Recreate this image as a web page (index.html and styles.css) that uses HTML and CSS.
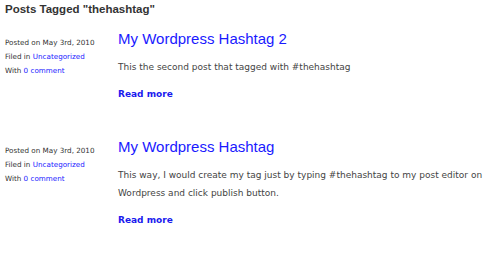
FILE: index.html
```html
<!DOCTYPE html>
<html lang="en">
<head>
  <meta charset="UTF-8">
  <title>Posts Tagged "thehashtag"</title>
  <link rel="stylesheet" href="styles.css">
</head>
<body>
<div class="container">
  <h2 class="archive-title">Posts Tagged "thehashtag"</h2>

  <div class="post">
    <div class="post-meta">
      <p>Posted on May 3rd, 2010</p>
      <p>Filed in <a href="#">Uncategorized</a></p>
      <p>With <a href="#">0 comment</a></p>
    </div>
    <div class="post-body">
      <h3 class="post-title"><a href="#">My Wordpress Hashtag 2</a></h3>
      <p class="post-text">This the second post that tagged with #thehashtag</p>
      <a class="read-more" href="#">Read more</a>
    </div>
  </div>

  <div class="post">
    <div class="post-meta">
      <p>Posted on May 3rd, 2010</p>
      <p>Filed in <a href="#">Uncategorized</a></p>
      <p>With <a href="#">0 comment</a></p>
    </div>
    <div class="post-body">
      <h3 class="post-title"><a href="#">My Wordpress Hashtag</a></h3>
      <p class="post-text">This way, I would create my tag just by typing #thehashtag to my post editor on Wordpress and click publish button.</p>
      <a class="read-more" href="#">Read more</a>
    </div>
  </div>
</div>
</body>
</html>
```

FILE: styles.css
```css
body {
  margin: 0;
  background: #fff;
  font-family: Verdana, "DejaVu Sans", sans-serif;
  color: #444;
}
a {
  color: #2222ff;
  text-decoration: none;
}
.container {
  padding: 0 5px;
}
.archive-title {
  margin: 0;
  font-family: Arial, "Liberation Sans", sans-serif;
  font-size: 11.5px;
  line-height: 18px;
  color: #333;
}
.post {
  display: flex;
  margin-top: 11px;
  margin-bottom: 34px;
}
.post-meta {
  width: 113px;
  flex-shrink: 0;
  padding-top: 7px;
  font-size: 7.2px;
  line-height: 14px;
  color: #333;
}
.post-meta p {
  margin: 0;
}
.post-body {
  flex: 1;
}
.post-title {
  margin: 0 0 9px;
  font-family: Arial, "Liberation Sans", sans-serif;
  font-weight: normal;
  font-size: 15px;
  line-height: 20px;
}
.post-title a {
  color: #1a1aff;
}
.post-text {
  margin: 0 0 9px;
  font-size: 9px;
  line-height: 18px;
}
.read-more {
  display: block;
  font-size: 9px;
  font-weight: bold;
  line-height: 18px;
  color: #1a1aee;
}
```
